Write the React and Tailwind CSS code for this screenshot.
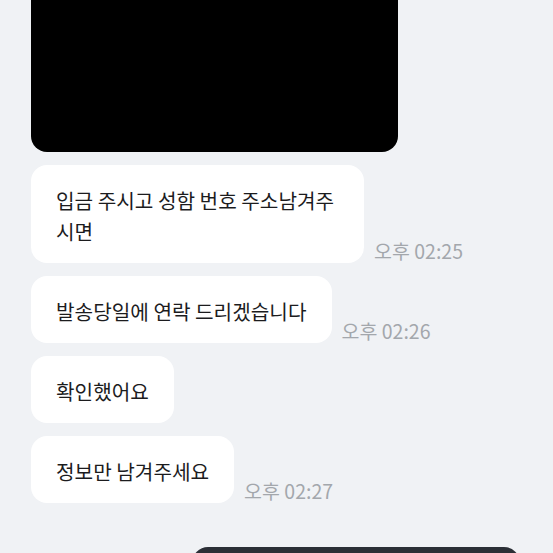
import React from 'react'

const messages = [
  { id: 1, text: '입금 주시고 성함 번호 주소남겨주시면', time: '오후 02:25' },
  { id: 2, text: '발송당일에 연락 드리겠습니다', time: '오후 02:26' },
  { id: 3, text: '확인했어요', time: null },
  { id: 4, text: '정보만 남겨주세요', time: '오후 02:27' },
]

function Bubble({ text, time }) {
  return (
    <div className="flex items-end">
      <div className="max-w-[333px] bg-white rounded-[16px] pl-[25px] pr-[25px] pt-[20px] pb-[16px] text-[20.2px] leading-[31px] text-[#1c1c1e] break-all">
        {text}
      </div>
      {time && (
        <span className="ml-[10px] mb-[2px] text-[19.5px] leading-[20px] text-[#a3a7ac] whitespace-nowrap">{time}</span>
      )}
    </div>
  )
}

export default function App() {
  return (
    <div
      className="w-[553px] h-[553px] overflow-hidden bg-[#f0f2f5] pl-[31px] flex flex-col"
      style={{ fontFamily: '"Noto Sans CJK KR", "Noto Sans", sans-serif' }}
    >
      {/* photo (cut off at top) */}
      <div className="w-[367px] h-[152px] shrink-0 bg-black rounded-b-[16px]"></div>

      <div className="flex flex-col gap-[13px] mt-[13px]">
        {messages.map((m) => (
          <Bubble key={m.id} text={m.text} time={m.time} />
        ))}
      </div>

      {/* my message, cut off at bottom */}
      <div className="flex justify-end pr-[33px] mt-[44px]">
        <div className="w-[328px] h-[40px] shrink-0 bg-[#2b2f36] rounded-t-[16px]"></div>
      </div>
    </div>
  )
}
